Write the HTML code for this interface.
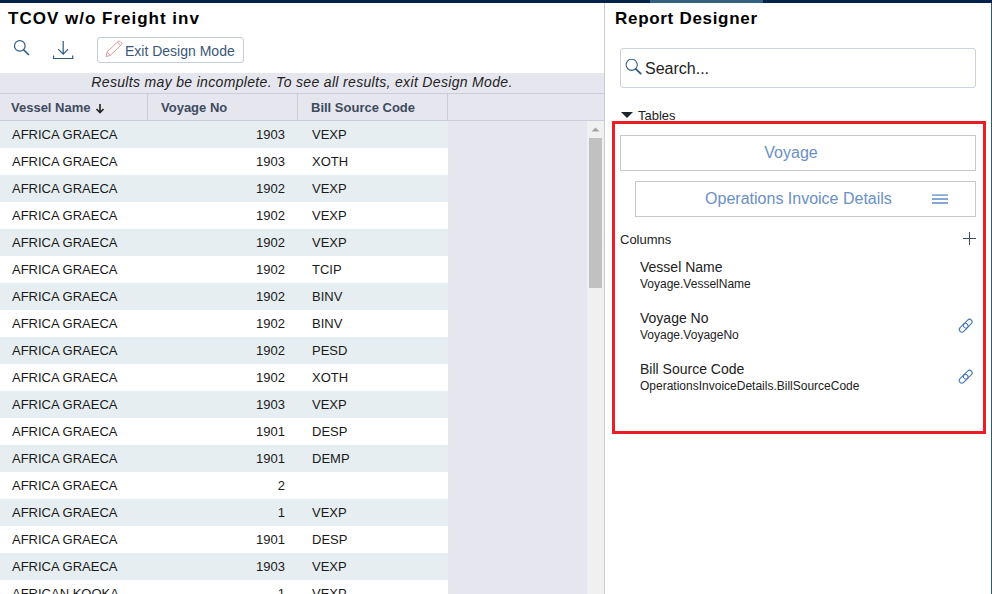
<!DOCTYPE html>
<html><head><meta charset="utf-8">
<style>
*{margin:0;padding:0;box-sizing:border-box;}
html,body{width:992px;height:594px;overflow:hidden;background:#fff;font-family:"Liberation Sans",sans-serif;}
.abs{position:absolute;}
#topbar{position:absolute;left:0;top:0;width:992px;height:3px;background:#05234a;}
#topseg{position:absolute;left:650px;top:0;width:113px;height:3px;background:#33617d;}
#left{position:absolute;left:0;top:3px;width:604px;height:591px;background:#fff;overflow:hidden;}
#title{position:absolute;left:8px;top:6px;font-size:17px;font-weight:bold;color:#000;white-space:nowrap;letter-spacing:1px;}
#btn{position:absolute;left:97px;top:34px;width:147px;height:26px;border:1px solid #c5cdd8;border-radius:3px;background:#fff;}
#btn span{position:absolute;left:27px;top:5px;font-size:14px;color:#3b5878;white-space:nowrap;}
#notice{position:absolute;left:0;top:70px;width:604px;height:21px;background:#e6e6ef;border-bottom:1px solid #c9cdd8;}
#notice span{position:absolute;left:0;width:604px;text-align:center;top:1px;font-size:14px;font-style:italic;color:#222;white-space:nowrap;letter-spacing:0.33px;}
#hdr{position:absolute;left:0;top:91px;width:604px;height:27px;background:#e6e6ef;border-bottom:1px solid #c9cdd8;}
.hc{position:absolute;top:0;height:26px;border-right:1px solid #c9cdd8;}
.hc span{position:absolute;top:6px;font-size:13px;font-weight:bold;color:#3e4b5e;white-space:nowrap;}
#grid{position:absolute;left:0;top:118px;width:587px;height:473px;background:#e6e6ef;}
.row{position:absolute;left:0;width:448px;height:27px;font-size:13px;color:#1a1a1a;}
.row.a{background:#e6eef1;}
.row.b{background:#fff;}
.row .c1{position:absolute;left:12px;top:6px;white-space:nowrap;}
.row .c2{position:absolute;right:163px;top:6px;white-space:nowrap;}
.row .c3{position:absolute;left:312px;top:6px;white-space:nowrap;}
#sb{position:absolute;left:587px;top:118px;width:17px;height:473px;background:#f0f0f0;}
#thumb{position:absolute;left:2px;top:17px;width:13px;height:150px;background:#c1c1c1;}
#right{position:absolute;left:604px;top:3px;width:388px;height:591px;background:#fff;border-left:1px solid #c9cdd8;}
#rtitle{position:absolute;left:10px;top:6px;font-size:17px;font-weight:bold;color:#000;white-space:nowrap;letter-spacing:0.7px;}
#search{position:absolute;left:15px;top:45px;width:356px;height:40px;border:1px solid #cdd3dc;border-radius:3px;}
#search span{position:absolute;left:24px;top:11px;font-size:16px;color:#222;}
#tables{position:absolute;left:33px;top:105px;font-size:13px;color:#222;}
#tri{position:absolute;left:15.5px;top:109px;width:0;height:0;border-left:6px solid transparent;border-right:6px solid transparent;border-top:6.5px solid #1e252b;}
#redbox{position:absolute;left:7px;top:118px;width:374px;height:313px;border:3px solid #ec1c24;background:#fff;}
.tbox{position:absolute;border:1px solid #c8c8c8;background:#fff;}
.tbox span{position:absolute;font-size:16px;color:#6a8fc8;white-space:nowrap;}
#cols{position:absolute;left:15px;top:229px;font-size:13px;color:#222;}
.ci{position:absolute;left:35px;}
.ci .n{font-size:14px;color:#222;white-space:nowrap;}
.ci .p{font-size:12px;color:#222;white-space:nowrap;margin-top:2px;}
</style></head><body>
<div id="topbar"></div><div id="topseg"></div><div style="position:absolute;left:991px;top:3px;width:1px;height:591px;background:#2f5b74;z-index:5"></div>
<div id="left">
  <div id="title">TCOV w/o Freight inv</div>
  <svg class="abs" style="left:12px;top:36px" width="20" height="20" viewBox="0 0 20 20"><circle cx="7.8" cy="6.9" r="5.3" fill="none" stroke="#2f5a82" stroke-width="1.2"/><line x1="11.6" y1="10.8" x2="17" y2="16" stroke="#2f5a82" stroke-width="1.6"/></svg>
  <svg class="abs" style="left:52px;top:37px" width="22" height="22" viewBox="0 0 22 22"><path d="M11.2 1v13M6.3 9.2l4.9 4.9 4.9-4.9M1.5 15.5v3h19.2v-3" fill="none" stroke="#2f5a82" stroke-width="1.2"/></svg>
  <div id="btn">
    <svg class="abs" style="left:0;top:0" width="30" height="24" viewBox="0 0 30 24"><path d="M8.1 18.6L9.1 13.9L20.2 3.4Q21.3 2.7 22.3 3.6L23.5 4.8Q24.3 5.7 23.8 6.3L12.3 17.4Z M9.1 13.9L12.3 17.4 M19.4 4.2L22.7 7.4" fill="none" stroke="#e09aa0" stroke-width="1" stroke-linejoin="round"/></svg>
    <span>Exit Design Mode</span>
  </div>
  <div id="notice"><span>Results may be incomplete. To see all results, exit Design Mode.</span></div>
  <div id="hdr">
    <div class="hc" style="left:0;width:148px"><span style="left:11px">Vessel Name <svg width="10" height="11" viewBox="0 0 10 11" style="vertical-align:-2px;margin-left:1px"><path d="M5 1v8M1.5 6l3.5 3.5 3.5-3.5" fill="none" stroke="#222" stroke-width="1.6"/></svg></span></div>
    <div class="hc" style="left:148px;width:150px"><span style="left:13px">Voyage No</span></div>
    <div class="hc" style="left:298px;width:150px"><span style="left:13px">Bill Source Code</span></div>
  </div>
  <div id="grid">
    <div class="row a" style="top:0"><span class="c1">AFRICA GRAECA</span><span class="c2">1903</span><span class="c3">VEXP</span></div>
    <div class="row b" style="top:27px"><span class="c1">AFRICA GRAECA</span><span class="c2">1903</span><span class="c3">XOTH</span></div>
    <div class="row a" style="top:54px"><span class="c1">AFRICA GRAECA</span><span class="c2">1902</span><span class="c3">VEXP</span></div>
    <div class="row b" style="top:81px"><span class="c1">AFRICA GRAECA</span><span class="c2">1902</span><span class="c3">VEXP</span></div>
    <div class="row a" style="top:108px"><span class="c1">AFRICA GRAECA</span><span class="c2">1902</span><span class="c3">VEXP</span></div>
    <div class="row b" style="top:135px"><span class="c1">AFRICA GRAECA</span><span class="c2">1902</span><span class="c3">TCIP</span></div>
    <div class="row a" style="top:162px"><span class="c1">AFRICA GRAECA</span><span class="c2">1902</span><span class="c3">BINV</span></div>
    <div class="row b" style="top:189px"><span class="c1">AFRICA GRAECA</span><span class="c2">1902</span><span class="c3">BINV</span></div>
    <div class="row a" style="top:216px"><span class="c1">AFRICA GRAECA</span><span class="c2">1902</span><span class="c3">PESD</span></div>
    <div class="row b" style="top:243px"><span class="c1">AFRICA GRAECA</span><span class="c2">1902</span><span class="c3">XOTH</span></div>
    <div class="row a" style="top:270px"><span class="c1">AFRICA GRAECA</span><span class="c2">1903</span><span class="c3">VEXP</span></div>
    <div class="row b" style="top:297px"><span class="c1">AFRICA GRAECA</span><span class="c2">1901</span><span class="c3">DESP</span></div>
    <div class="row a" style="top:324px"><span class="c1">AFRICA GRAECA</span><span class="c2">1901</span><span class="c3">DEMP</span></div>
    <div class="row b" style="top:351px"><span class="c1">AFRICA GRAECA</span><span class="c2">2</span><span class="c3"></span></div>
    <div class="row a" style="top:378px"><span class="c1">AFRICA GRAECA</span><span class="c2">1</span><span class="c3">VEXP</span></div>
    <div class="row b" style="top:405px"><span class="c1">AFRICA GRAECA</span><span class="c2">1901</span><span class="c3">DESP</span></div>
    <div class="row a" style="top:432px"><span class="c1">AFRICA GRAECA</span><span class="c2">1903</span><span class="c3">VEXP</span></div>
    <div class="row b" style="top:459px"><span class="c1">AFRICAN KOOKA</span><span class="c2">1</span><span class="c3">VEXP</span></div>
  </div>
  <div id="sb">
    <svg class="abs" style="left:4px;top:5px" width="9" height="6" viewBox="0 0 9 6"><path d="M0.5 5.5L4.5 1.5L8.5 5.5z" fill="#a3a3a3"/></svg>
    <div id="thumb"></div>
  </div>
</div>
<div id="right">
  <div id="rtitle">Report Designer</div>
  <div id="search">
    <svg class="abs" style="left:4px;top:10px" width="18" height="18" viewBox="0 0 18 18"><circle cx="6.7" cy="5.8" r="5.6" fill="none" stroke="#3a6690" stroke-width="1.1"/><line x1="10.4" y1="9.6" x2="16.2" y2="15.2" stroke="#2f5a82" stroke-width="1.8"/></svg>
    <span>Search...</span>
  </div>
  <div id="tri"></div>
  <div id="tables">Tables</div>
  <div id="redbox">
    <div class="tbox" style="left:5px;top:11px;width:356px;height:36px"><span style="left:0;width:340px;text-align:center;top:8px">Voyage</span></div>
    <div class="tbox" style="left:20px;top:57px;width:341px;height:36px"><span style="left:0;width:325px;text-align:center;top:8px">Operations Invoice Details</span>
      <svg class="abs" style="left:295px;top:11px" width="18" height="14" viewBox="0 0 18 14"><path d="M1 2.1h16M1 6h16M1 10h16" stroke="#86a6d6" stroke-width="1.8"/></svg>
    </div>
    <div class="abs" style="left:5px;top:108px;font-size:13px;color:#222">Columns</div>
    <svg class="abs" style="left:348px;top:108px" width="13" height="13" viewBox="0 0 13 13"><path d="M6.5 0v13M0 6.5h13" stroke="#3c4a66" stroke-width="1"/></svg>
    <div class="ci" style="left:25px;top:135px"><div class="n">Vessel Name</div><div class="p">Voyage.VesselName</div></div>
    <div class="ci" style="left:25px;top:186px"><div class="n">Voyage No</div><div class="p">Voyage.VoyageNo</div></div>
    <div class="ci" style="left:25px;top:237px"><div class="n">Bill Source Code</div><div class="p">OperationsInvoiceDetails.BillSourceCode</div></div>
    <svg class="abs" style="left:335px;top:186px" width="30" height="30" viewBox="0 0 30 30"><g transform="translate(15.7 15.7) rotate(-45)" fill="none" stroke="#3d74b0" stroke-width="1"><rect x="-8" y="-2.6" width="10.2" height="5.2" rx="2.6"/><rect x="-2.2" y="-2.6" width="10.2" height="5.2" rx="2.6"/></g></svg>
    <svg class="abs" style="left:335px;top:237px" width="30" height="30" viewBox="0 0 30 30"><g transform="translate(15.7 15.7) rotate(-45)" fill="none" stroke="#3d74b0" stroke-width="1"><rect x="-8" y="-2.6" width="10.2" height="5.2" rx="2.6"/><rect x="-2.2" y="-2.6" width="10.2" height="5.2" rx="2.6"/></g></svg>
  </div>
</div>
</body></html>
